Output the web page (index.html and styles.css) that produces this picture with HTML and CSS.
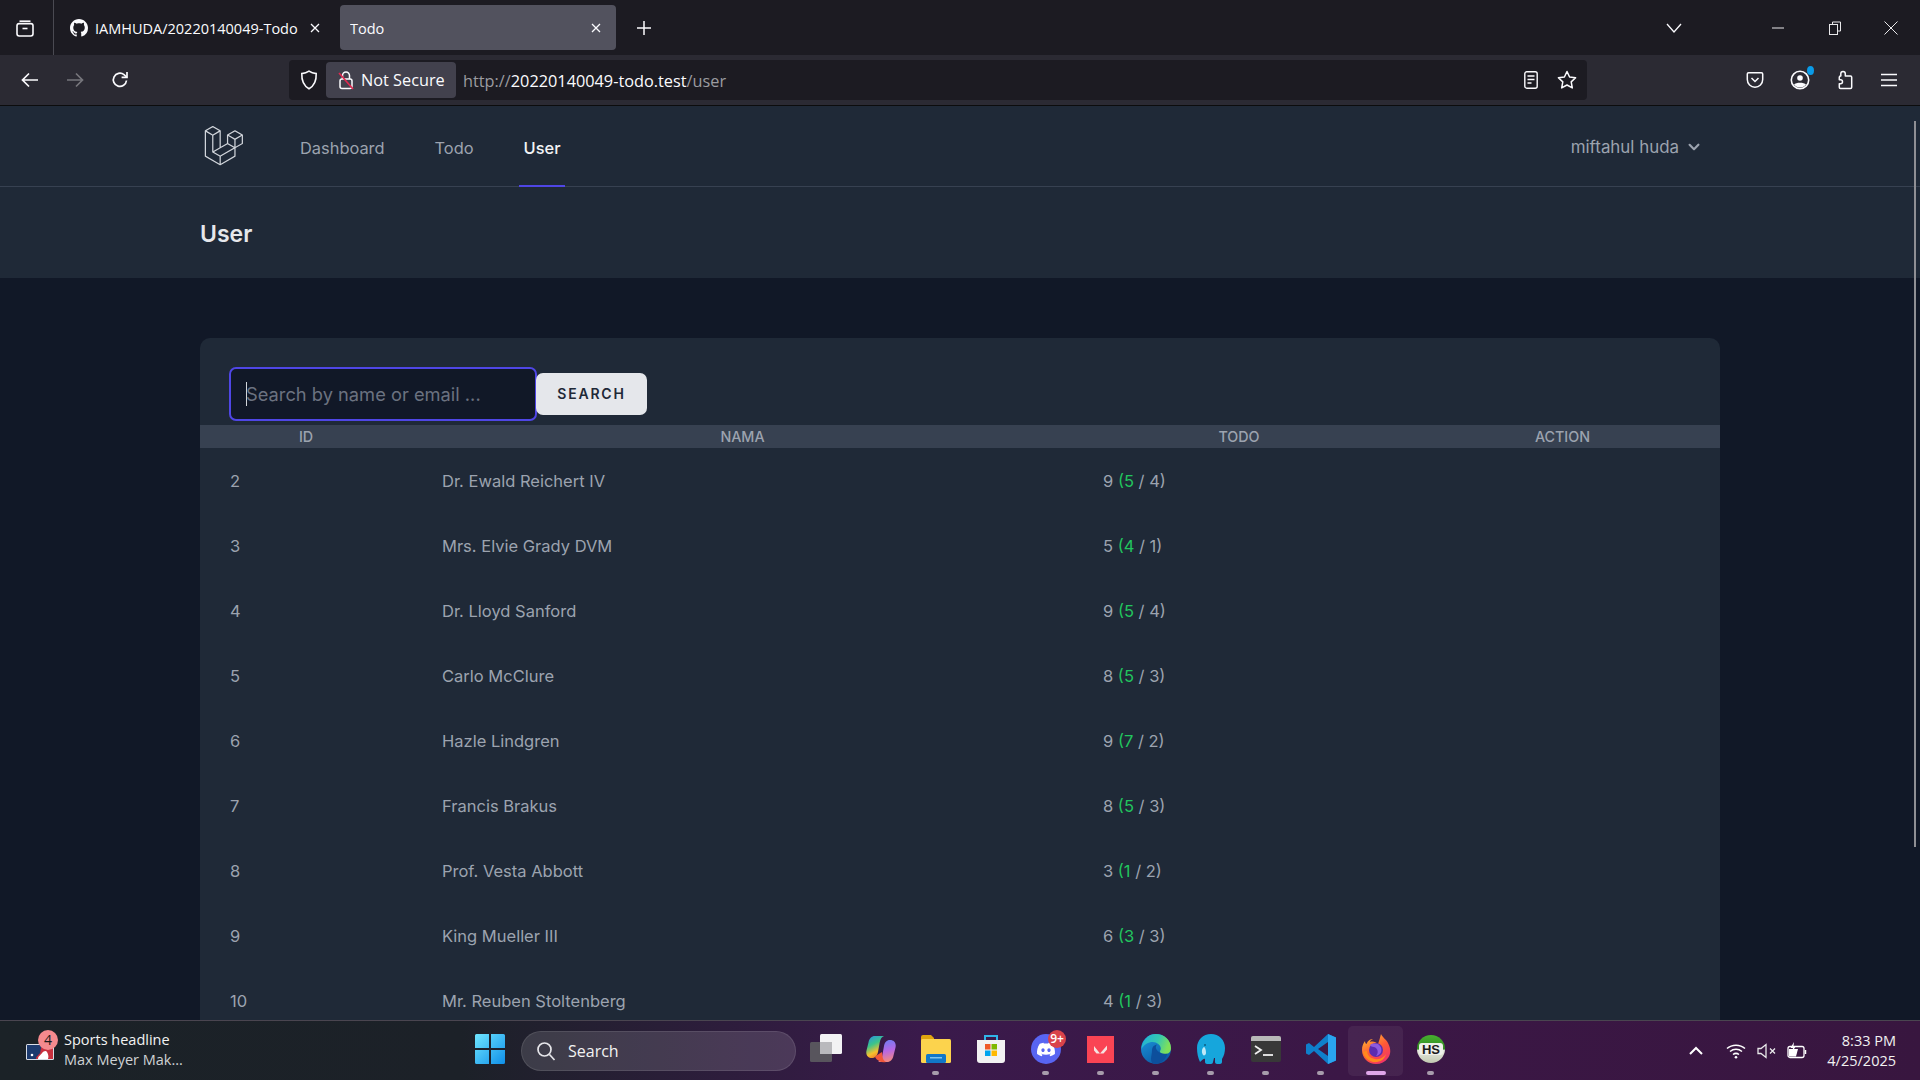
FILE: index.html
```html
<!DOCTYPE html>
<html lang="en">
<head>
    <meta charset="UTF-8">
    <title>Todo</title>
    <link rel="stylesheet" href="styles.css">
</head>
<body>
<div class="screen">
    <div class="tabbar">
        <div class="tab-list-btn">
            <svg width="20" height="20" viewBox="0 0 20 20" fill="none" stroke="#fbfbfe" stroke-width="1.6"><path d="M4.5 3.2h11"/><rect x="2" y="5.6" width="16" height="12.4" rx="2.2"/><path d="M7.5 10.5h5"/></svg>
        </div>
        <div class="tab tab-first">
            <svg class="favicon" width="18" height="18" viewBox="0 0 16 16" fill="#fbfbfe"><path d="M8 0C3.58 0 0 3.58 0 8c0 3.54 2.29 6.53 5.47 7.59.4.07.55-.17.55-.38 0-.19-.01-.82-.01-1.49-2.01.37-2.53-.49-2.69-.94-.09-.23-.48-.94-.82-1.13-.28-.15-.68-.52-.01-.53.63-.01 1.08.58 1.23.82.72 1.21 1.87.87 2.33.66.07-.52.28-.87.51-1.07-1.78-.2-3.64-.89-3.64-3.95 0-.87.31-1.59.82-2.15-.08-.2-.36-1.02.08-2.12 0 0 .67-.21 2.2.82.64-.18 1.32-.27 2-.27.68 0 1.36.09 2 .27 1.53-1.04 2.2-.82 2.2-.82.44 1.1.16 1.92.08 2.12.51.56.82 1.27.82 2.15 0 3.07-1.87 3.75-3.65 3.95.29.25.54.73.54 1.48 0 1.07-.01 1.93-.01 2.2 0 .21.15.46.55.38A8.013 8.013 0 0016 8c0-4.42-3.58-8-8-8z"/></svg>
            <span class="tab-title">IAMHUDA/20220140049-Todo</span>
            <svg class="tab-close" width="10" height="10" viewBox="0 0 10 10" stroke="#fbfbfe" stroke-width="1.3"><path d="M1 1l8 8M9 1l-8 8"/></svg>
        </div>
        <div class="tab tab-active">
            <span class="tab-title">Todo</span>
            <svg class="tab-close" width="10" height="10" viewBox="0 0 10 10" stroke="#fbfbfe" stroke-width="1.3"><path d="M1 1l8 8M9 1l-8 8"/></svg>
        </div>
        <div class="new-tab">
            <svg width="16" height="16" viewBox="0 0 16 16" stroke="#fbfbfe" stroke-width="1.5"><path d="M8 1v14M1 8h14"/></svg>
        </div>
        <div class="window-controls">
            <svg class="list-all" width="16" height="10" viewBox="0 0 16 10" fill="none" stroke="#fbfbfe" stroke-width="1.3"><path d="M1 1l7 8 7-8"/></svg>
            <svg class="win-btn" width="12" height="12" viewBox="0 0 12 12" stroke="#e8e8ea" stroke-width="1"><path d="M0 6h12"/></svg>
            <svg class="win-btn win-restore" width="12" height="14" viewBox="0 0 12 14" fill="none" stroke="#e8e8ea" stroke-width="1"><path d="M3.5 3V1h8v9H9"/><rect x=".5" y="3.5" width="8" height="10"/></svg>
            <svg class="win-btn" width="14" height="14" viewBox="0 0 14 14" stroke="#e8e8ea" stroke-width="1"><path d="M.5.5l13 13M13.5.5l-13 13"/></svg>
        </div>
    </div>

    <div class="toolbar">
        <div class="nav-arrows">
            <svg width="18" height="16" viewBox="0 0 18 16" fill="none" stroke="#fbfbfe" stroke-width="1.7"><path d="M17 8H2M8 1.5L1.5 8 8 14.5"/></svg>
            <svg width="18" height="16" viewBox="0 0 18 16" fill="none" stroke="#76767c" stroke-width="1.7"><path d="M1 8h15M10 1.5L16.5 8 10 14.5"/></svg>
            <svg width="18" height="18" viewBox="0 0 18 18" fill="none" stroke="#fbfbfe" stroke-width="1.7"><path d="M15.5 9.5A6.6 6.6 0 1 1 13 3.6L15.6 6"/><path d="M16 1v5.4h-5.4"/></svg>
        </div>
        <div class="urlbar">
            <svg class="shield" width="18" height="20" viewBox="0 0 18 20" fill="none" stroke="#fbfbfe" stroke-width="1.6"><path d="M9 1.2c2 1.4 4.6 2.2 7.2 2.4.3 6.6-1.8 12-7.2 15.2C3.600 15.600 1.500 10.200 1.800 3.600 4.400 3.400 7 2.600 9 1.200z"/></svg>
            <div class="not-secure">
                <svg width="18" height="20" viewBox="0 0 18 20" fill="none"><path d="M5.500 9V5.500a3.500 3.500 0 0 1 7 0V9" stroke="#fbfbfe" stroke-width="1.500"/><rect x="3" y="9" width="12" height="9.500" rx="2" stroke="#fbfbfe" stroke-width="1.500"/><path d="M2 3l14 16" stroke="#e22850" stroke-width="1.600"/></svg>
                <span>Not Secure</span>
            </div>
            <div class="url"><span class="url-dim">http://</span>20220140049-todo.test<span class="url-dim">/user</span></div>
            <svg class="reader" width="14" height="18" viewBox="0 0 14 18" fill="none" stroke="#fbfbfe" stroke-width="1.400"><rect x=".8" y=".8" width="12.400" height="16.400" rx="2"/><path d="M3.500 5h7M3.500 8.500h7M3.500 12h4"/></svg>
            <svg class="star" width="20" height="20" viewBox="0 0 20 20" fill="none" stroke="#fbfbfe" stroke-width="1.500" stroke-linejoin="round"><path d="M10 1.500l2.600 5.500 6 .8-4.400 4.100 1.100 6L10 15l-5.300 2.900 1.100-6L1.400 7.800l6-.8z"/></svg>
        </div>
        <div class="toolbar-right">
            <svg width="18" height="18" viewBox="0 0 18 18" fill="none" stroke="#fbfbfe" stroke-width="1.500"><path d="M2.500 1.800h13c.7 0 1.200.5 1.200 1.200v5.500a7.700 7.700 0 0 1-15.400 0V3c0-.7.500-1.200 1.200-1.200z"/><path d="M5.500 7L9 10.500 12.500 7"/></svg>
            <span class="account">
                <svg width="20" height="20" viewBox="0 0 20 20" fill="none"><circle cx="10" cy="10" r="8.700" stroke="#fbfbfe" stroke-width="1.600"/><circle cx="10" cy="8" r="2.800" fill="#fbfbfe"/><path d="M4 14.500c2-2.500 10-2.500 12 0-1.500 2-3.500 3-6 3s-4.500-1-6-3z" fill="#fbfbfe"/></svg>
                <i class="account-dot"></i>
            </span>
            <svg width="18" height="20" viewBox="0 0 18 20" fill="none" stroke="#fbfbfe" stroke-width="1.500" stroke-linejoin="round"><path d="M7 1.500c1.500 0 2.300 1 2.300 2.300V6h5.200c.7 0 1.200.5 1.200 1.200v10.100c0 .7-.5 1.200-1.200 1.200H4.500c-.7 0-1.200-.5-1.200-1.200v-3.600h1.200c1.400 0 2-1 2-2s-.6-2-2-2H3.300V7.200C3.300 6.500 3.800 6 4.500 6h.3V3.800C4.800 2.500 5.500 1.500 7 1.500z"/></svg>
            <svg class="menu-icon" width="16" height="14" viewBox="0 0 16 14" stroke="#fbfbfe" stroke-width="1.600"><path d="M0 1.500h16M0 7h16M0 12.500h16"/></svg>
        </div>
    </div>

    <div class="page">
        <nav class="topnav">
            <div class="topnav-inner">
                <svg class="logo" width="40" height="40" viewBox="0 0 50 52" fill="#d1d5db"><path d="M49.626 11.564a.809.809 0 0 1 .028.209v10.972a.8.8 0 0 1-.402.694l-9.209 5.302V39.25c0 .286-.152.55-.4.694L20.42 51.01c-.044.025-.092.041-.14.058-.018.006-.035.017-.054.022a.805.805 0 0 1-.41 0c-.022-.006-.042-.018-.063-.026-.044-.016-.09-.03-.132-.054L.402 39.944A.801.801 0 0 1 0 39.25V6.334c0-.072.01-.142.028-.21.006-.023.02-.044.028-.067.015-.042.029-.085.051-.124.015-.026.037-.047.055-.071.023-.032.044-.065.071-.093.023-.023.053-.04.079-.06.029-.024.055-.05.088-.069h.001l9.61-5.533a.802.802 0 0 1 .8 0l9.61 5.533h.002c.032.02.059.045.088.068.026.02.055.038.078.06.028.029.048.062.072.094.017.024.04.045.054.071.023.04.036.082.052.124.008.023.022.044.028.068a.809.809 0 0 1 .028.209v20.559l8.008-4.611v-10.51c0-.07.01-.141.028-.208.007-.024.02-.045.028-.068.016-.042.03-.085.052-.124.015-.026.037-.047.054-.071.024-.032.044-.065.072-.093.023-.023.052-.04.078-.06.03-.024.056-.05.088-.069h.001l9.611-5.533a.801.801 0 0 1 .8 0l9.61 5.533c.034.02.06.045.09.068.025.02.054.038.077.06.028.029.048.062.072.094.018.024.04.045.054.071.023.039.036.082.052.124.009.023.022.044.028.068zm-1.574 10.718v-9.124l-3.363 1.936-4.646 2.675v9.124l8.01-4.611zm-9.61 16.505v-9.13l-4.57 2.61-13.05 7.448v9.216l17.62-10.144zM1.602 7.719v31.068L19.22 48.93v-9.214l-9.204-5.209-.003-.002-.004-.002c-.031-.018-.057-.044-.086-.066-.025-.02-.054-.036-.076-.058l-.002-.003c-.026-.025-.044-.056-.066-.084-.02-.027-.044-.05-.06-.078l-.001-.003c-.018-.03-.029-.066-.042-.1-.013-.03-.03-.058-.038-.09v-.001c-.01-.038-.012-.078-.016-.117-.004-.03-.012-.06-.012-.09v-.002-21.481L4.965 9.654 1.602 7.72zm8.81-5.994L2.405 6.334l8.005 4.609 8.006-4.61-8.006-4.608zm4.164 28.764l4.645-2.674V7.719l-3.363 1.936-4.646 2.675v20.096l3.364-1.937zM39.243 7.164l-8.006 4.609 8.006 4.609 8.005-4.61-8.005-4.608zm-.801 10.605l-4.646-2.675-3.363-1.936v9.124l4.645 2.674 3.364 1.937v-9.124zM20.02 38.33l11.743-6.704 5.87-3.35-8-4.606-9.211 5.303-8.395 4.833 7.993 4.524z"/></svg>
                <a class="nav-link">Dashboard</a>
                <a class="nav-link">Todo</a>
                <a class="nav-link active">User</a>
                <div class="user-menu">
                    <span>miftahul huda</span>
                    <svg width="22" height="22" viewBox="0 0 20 20" fill="#9ca3af"><path d="M5.293 7.293a1 1 0 0 1 1.414 0L10 10.586l3.293-3.293a1 1 0 1 1 1.414 1.414l-4 4a1 1 0 0 1-1.414 0l-4-4a1 1 0 0 1 0-1.414z"/></svg>
                </div>
            </div>
        </nav>
        <header class="page-header">
            <h2>User</h2>
        </header>
        <main class="content">
            <div class="card">
                <form class="search-form">
                    <div class="search-input"><i class="caret"></i><span>Search by name or email ...</span></div>
                    <button type="button" class="search-btn">Search</button>
                </form>
                <table class="user-table">
                    <colgroup>
                        <col class="col-id"><col class="col-name"><col class="col-todo"><col class="col-action">
                    </colgroup>
                    <thead>
                        <tr><th>ID</th><th>Nama</th><th>Todo</th><th>Action</th></tr>
                    </thead>
                    <tbody>
                        <tr><td>2</td><td>Dr. Ewald Reichert IV</td><td>9 <span class="done">(5</span> / 4)</td><td></td></tr>
                        <tr><td>3</td><td>Mrs. Elvie Grady DVM</td><td>5 <span class="done">(4</span> / 1)</td><td></td></tr>
                        <tr><td>4</td><td>Dr. Lloyd Sanford</td><td>9 <span class="done">(5</span> / 4)</td><td></td></tr>
                        <tr><td>5</td><td>Carlo McClure</td><td>8 <span class="done">(5</span> / 3)</td><td></td></tr>
                        <tr><td>6</td><td>Hazle Lindgren</td><td>9 <span class="done">(7</span> / 2)</td><td></td></tr>
                        <tr><td>7</td><td>Francis Brakus</td><td>8 <span class="done">(5</span> / 3)</td><td></td></tr>
                        <tr><td>8</td><td>Prof. Vesta Abbott</td><td>3 <span class="done">(1</span> / 2)</td><td></td></tr>
                        <tr><td>9</td><td>King Mueller III</td><td>6 <span class="done">(3</span> / 3)</td><td></td></tr>
                        <tr><td>10</td><td>Mr. Reuben Stoltenberg</td><td>4 <span class="done">(1</span> / 3)</td><td></td></tr>
                    </tbody>
                </table>
            </div>
        </main>
        <div class="scrollbar"></div>
    </div>

    <div class="taskbar">
        <div class="widget">
            <span class="widget-icon">
                <svg width="28" height="16" viewBox="0 0 28 16"><rect width="28" height="16" rx="1.500" fill="#d8dde6"/><rect x="1" y="1" width="26" height="14" fill="#1c3a6e"/><path d="M17 1h10v14H10c0-3 3-4 4-6s0-5 3-8z" fill="#c8303e"/><path d="M12 15c0-3 3-4 4-6 1.500-2 4-3 5-1s2 4 1 7z" fill="#fff"/><circle cx="6" cy="11" r="1.300" fill="#fff"/></svg>
                <i class="widget-badge">4</i>
            </span>
            <div class="widget-text">
                <div>Sports headline</div>
                <div class="widget-sub">Max Meyer Mak...</div>
            </div>
        </div>

        <div class="tb-item tb-start">
            <svg width="30" height="30" viewBox="0 0 30 30"><defs><linearGradient id="win" x1="0" y1="0" x2="1" y2="1"><stop offset="0" stop-color="#6fe6ff"/><stop offset="1" stop-color="#0f8fe8"/></linearGradient></defs><path d="M0 1.500A1.500 1.500 0 0 1 1.500 0H14v14H0zM16 0h12.500A1.500 1.500 0 0 1 30 1.500V14H16zM0 16h14v14H1.500A1.500 1.500 0 0 1 0 28.500zM16 16h14v12.500a1.500 1.500 0 0 1-1.500 1.500H16z" fill="url(#win)"/></svg>
        </div>
        <div class="tb-search">
            <svg width="20" height="20" viewBox="0 0 20 20" fill="none" stroke="#e6e6ea" stroke-width="1.700"><circle cx="8.500" cy="8.500" r="6.500"/><path d="M13.500 13.500l5 5.500"/></svg>
            <span>Search</span>
        </div>

        <div class="tb-item">
            <svg width="32" height="30" viewBox="0 0 32 30"><rect x="10" y="0" width="22" height="20" rx="1.500" fill="#f2f2f4"/><rect x="0" y="8" width="22" height="20" rx="1.500" fill="#5c5c60" fill-opacity=".9"/><rect x="10" y="8" width="12" height="12" fill="#b9b9bd"/></svg>
        </div>
        <div class="tb-item">
            <svg width="30" height="28" viewBox="0 0 30 28"><defs><linearGradient id="cp1" x1="0" y1="0" x2=".4" y2="1"><stop offset="0" stop-color="#2a8fe8"/><stop offset=".45" stop-color="#3cc48a"/><stop offset=".8" stop-color="#f6c12e"/><stop offset="1" stop-color="#f08a2a"/></linearGradient><linearGradient id="cp2" x1=".4" y1="0" x2=".6" y2="1"><stop offset="0" stop-color="#6f7cf2"/><stop offset=".5" stop-color="#b768e4"/><stop offset="1" stop-color="#f58a7a"/></linearGradient></defs><path d="M9 1h9c-2.500 1-3.500 3-4.200 6L12 17c-.7 3.500-2.500 6-6 6-4 0-6.500-3-5.500-7.500l2-8C3.300 3.500 5.500 1 9 1z" fill="url(#cp1)"/><path d="M21 27h-9c2.500-1 3.500-3 4.200-6L18 11c.7-3.500 2.500-6 6-6 4 0 6.500 3 5.500 7.500l-2 8c-.8 4-3 6.500-6.500 6.500z" fill="url(#cp2)"/><path d="M9 22c2 4 7 6 11 5-2-1-3.500-3-3.500-6l-.5-4c-2 1-5 3-7 5z" fill="#f0583a"/></svg>
        </div>
        <div class="tb-item has-dot">
            <svg width="30" height="28" viewBox="0 0 30 28"><path d="M0 2a2 2 0 0 1 2-2h8l3 3h0v4H0z" fill="#e0a50f"/><rect y="4" width="30" height="24" rx="1.500" fill="#fcd34d"/><rect x="5" y="19" width="20" height="9" rx="1.500" fill="#1177c8"/><rect x="9" y="22" width="12" height="1.500" fill="#7cc4f0"/></svg>
        </div>
        <div class="tb-item">
            <svg width="30" height="30" viewBox="0 0 30 30"><path d="M9 6V2h12v4" fill="none" stroke="#30b4e8" stroke-width="2"/><path d="M1 6h28v20a3 3 0 0 1-3 3H4a3 3 0 0 1-3-3z" fill="#f2f2f2"/><rect x="9" y="10" width="5.500" height="5.500" fill="#ef5a28"/><rect x="15.500" y="10" width="5.500" height="5.500" fill="#7eb900"/><rect x="9" y="16.500" width="5.500" height="5.500" fill="#00a4ef"/><rect x="15.500" y="16.500" width="5.500" height="5.500" fill="#ffb900"/></svg>
        </div>
        <div class="tb-item has-dot">
            <svg width="30" height="30" viewBox="0 0 30 30"><ellipse cx="15" cy="15" rx="15" ry="15" fill="#5865f2"/><g transform="translate(6 6.500) scale(.75)"><path fill="#fff" d="M20.317 4.37a19.791 19.791 0 0 0-4.885-1.515.074.074 0 0 0-.079.037c-.21.375-.444.864-.608 1.25a18.27 18.27 0 0 0-5.487 0 12.64 12.64 0 0 0-.617-1.25.077.077 0 0 0-.079-.037A19.736 19.736 0 0 0 3.677 4.37a.07.07 0 0 0-.032.027C.533 9.046-.32 13.58.099 18.057a.082.082 0 0 0 .031.057 19.9 19.9 0 0 0 5.993 3.03.078.078 0 0 0 .084-.028c.462-.63.874-1.295 1.226-1.994a.076.076 0 0 0-.041-.106 13.107 13.107 0 0 1-1.872-.892.077.077 0 0 1-.008-.128 10.2 10.2 0 0 0 .372-.292.074.074 0 0 1 .077-.01c3.928 1.793 8.18 1.793 12.062 0a.074.074 0 0 1 .078.01c.12.098.246.198.373.292a.077.077 0 0 1-.006.127 12.299 12.299 0 0 1-1.873.892.077.077 0 0 0-.041.107c.36.698.772 1.362 1.225 1.993a.076.076 0 0 0 .084.028 19.839 19.839 0 0 0 6.002-3.03.077.077 0 0 0 .032-.054c.5-5.177-.838-9.674-3.549-13.66a.061.061 0 0 0-.031-.03zM8.020 15.330c-1.183 0-2.157-1.085-2.157-2.419 0-1.333.956-2.419 2.157-2.419 1.210 0 2.176 1.096 2.157 2.420 0 1.333-.956 2.418-2.157 2.418zm7.975 0c-1.183 0-2.157-1.085-2.157-2.419 0-1.333.955-2.419 2.157-2.419 1.210 0 2.176 1.096 2.157 2.420 0 1.333-.946 2.418-2.157 2.418z"/></g></svg>
            <i class="tb-badge">9+</i>
        </div>
        <div class="tb-item has-dot">
            <svg width="27" height="27" viewBox="0 0 27 27"><rect width="27" height="27" fill="#fa4454"/><path d="M7 10l6 7.500h-3.500L7 14.500zM20 9.500v4l-3.500 4H13z" fill="#f5e3e0"/></svg>
        </div>
        <div class="tb-item has-dot">
            <svg width="30" height="30" viewBox="0 0 30 30"><defs><linearGradient id="edge1" x1="0" y1="0" x2=".6" y2="1"><stop offset="0" stop-color="#1c9be0"/><stop offset="1" stop-color="#0c59a4"/></linearGradient><linearGradient id="edge2" x1="0" y1="0" x2="1" y2=".3"><stop offset="0" stop-color="#1faedd"/><stop offset=".6" stop-color="#35c8b0"/><stop offset="1" stop-color="#7ee05a"/></linearGradient></defs><circle cx="15" cy="15" r="15" fill="url(#edge1)"/><path d="M15 0c8 0 15 6 15 14 0 4-2.500 6-6 6-2 0-5-.5-5-2.500 0-1 .8-1.500.8-3 0-3.500-4-6.500-8-6.500-4.500 0-8.500 2.500-11.500 7C1.500 6 7 0 15 0z" fill="url(#edge2)"/><path d="M11 16c0-3 2-5 5-5.500-1.500 1.500-1.500 3.500-.5 5 1.800 3 6 5 11 4-2 6-7 10.500-12 10.500-3 0-4.500-2-4.500-5 0-2 1-6 1-9z" fill="#0d4f9c"/></svg>
        </div>
        <div class="tb-item has-dot">
            <svg width="28" height="30" viewBox="0 0 28 30"><path d="M14 0c8 0 14 6 14 14 0 4-1 8-3 11v3c0 1-1 2-2 2h-3c-1 0-2-1-2-2v-4h-1l-1 4c0 1-1 2-2 2H10c-1 0-2-1-2-2v-3C6 24 5 27 3 28 1 24 0 19 0 14 0 6 6 0 14 0z" fill="#16a6dc"/><path d="M7 13c-2 1-3 5-1 8 1 1 3 0 3-2 0-3-1-6-2-6z" fill="#bfe9f7"/><circle cx="8" cy="11" r="1" fill="#0b5f85"/></svg>
        </div>
        <div class="tb-item has-dot">
            <svg width="30" height="26" viewBox="0 0 30 26"><rect width="30" height="26" rx="2" fill="#383838"/><path d="M0 2a2 2 0 0 1 2-2h26a2 2 0 0 1 2 2v3H0z" fill="#b8b8b8"/><path d="M4 10l6 4-6 4" fill="none" stroke="#f0f0f0" stroke-width="1.800"/><path d="M12 19h10" stroke="#f0f0f0" stroke-width="1.800"/></svg>
        </div>
        <div class="tb-item has-dot">
            <svg width="30" height="30" viewBox="0 0 30 30"><path d="M22 0l8 3.500v23L22 30 8 17l-5 4-3-1.500V10.500L3 9l5 4z" fill="#0f7fcb"/><path d="M22 0l8 3.500v23L22 30z" fill="#2aa4ef"/><path d="M22 8L12 15l10 7z" fill="#3b1846"/></svg>
        </div>
        <div class="tb-item tb-current">
            <svg width="30" height="30" viewBox="0 0 30 30"><defs><linearGradient id="ff" x1=".2" y1="0" x2=".8" y2="1"><stop offset="0" stop-color="#ffbd2e"/><stop offset=".5" stop-color="#ff5a36"/><stop offset="1" stop-color="#ef2f6e"/></linearGradient></defs><path d="M20 0c1 3 5 5 7 9 3 6 3 11 0 15-3 4-7 6-12 6C7 30 1 24 1 16c0-4 1-6 3-9 0 2 1 3 1.500 3C7 6 10 5 12 5c-2 1-3 2-3 3 3-1 6 0 8 2 1-3 2-6 3-10z" fill="url(#ff)"/><circle cx="15" cy="16" r="7" fill="#5b2cb0"/><path d="M9 11c3-2 8-2 10 1 3 4 1 9-4 10 3-3 2-8-2-9-2-.5-3 0-4-2z" fill="#8d5be0"/><path d="M2 18c1 6 7 11 14 10 5-.7 8-4 9-8-2 3-6 6-11 5-5-.7-8-4-8-8-1 0-3 0-4 1z" fill="#ff8a1e"/></svg>
        </div>
        <div class="tb-item has-dot">
            <svg width="30" height="30" viewBox="0 0 30 30"><defs><linearGradient id="hs" x1="0" y1="0" x2="0" y2="1"><stop offset="0" stop-color="#48b030"/><stop offset=".5" stop-color="#2f8a20"/><stop offset=".55" stop-color="#e8eae0"/><stop offset="1" stop-color="#c0c8b0"/></linearGradient></defs><circle cx="15" cy="15" r="14" fill="url(#hs)"/><rect x="3" y="9" width="24" height="12" rx="3" fill="#eef0ea"/><text x="15" y="19.500" class="hs-text">HS</text></svg>
        </div>

        <div class="tray">
            <svg class="tray-caret" width="14" height="9" viewBox="0 0 14 9" fill="none" stroke="#fff" stroke-width="2"><path d="M1 8l6-6 6 6"/></svg>
            <svg class="tray-wifi" width="20" height="16" viewBox="0 0 20 16" fill="none" stroke="#fff" stroke-width="1.500"><path d="M1 5.500c5-4.500 13-4.500 18 0M4 8.500c3.500-3 8.500-3 12 0M7 11.500c2-1.500 4-1.500 6 0"/><circle cx="10" cy="14.300" r="1.300" fill="#fff" stroke="none"/></svg>
            <svg class="tray-vol" width="20" height="16" viewBox="0 0 20 16" fill="none" stroke="#e8e8ea" stroke-width="1.300"><path d="M1 5.500h3L9 1.500v13l-5-4H1z"/><path d="M13 5.500l5 5M18 5.500l-5 5"/></svg>
            <svg class="tray-bat" width="20" height="18" viewBox="0 0 20 18" fill="none"><rect x="1" y="4.500" width="16" height="11" rx="2" stroke="#fff" stroke-width="1.300"/><path d="M18.500 8v4" stroke="#fff" stroke-width="1.500"/><path d="M2 7h9l-2 7.500H2z" fill="#fff"/><path d="M7 0L3.500 6H6L5 10l4-6H6.500z" fill="#fff"/></svg>
            <div class="clock">
                <div>8:33 PM</div>
                <div>4/25/2025</div>
            </div>
        </div>
    </div>
</div>
</body>
</html>
```
FILE: styles.css
```css
* {
    box-sizing: border-box;
}
body {
    margin: 0;
    background-color: #111827;
    font-family: Inter, "Noto Sans", sans-serif;
    overflow: hidden;
}
svg {
    display: block;
    flex: none;
}
.screen {
    display: flex;
    flex-direction: column;
    height: 100vh;
}

/* browser tabs */
.tabbar {
    display: flex;
    align-items: center;
    height: 55px;
    background: #1c1b22;
    color: #fbfbfe;
    font-family: "Open Sans", "Noto Sans", sans-serif;
    font-size: 14.5px;
}
.tab-list-btn {
    display: flex;
    align-items: center;
    justify-content: center;
    width: 54px;
    height: 55px;
    padding-right: 4px;
    border-right: 1px solid #4a4a52;
}
.tab {
    display: flex;
    align-items: center;
    height: 45px;
    border-radius: 4px;
}
.tab-first {
    width: 286px;
    padding: 0 20px 0 16px;
}
.tab-active {
    width: 276px;
    padding: 0 15px 0 10px;
    background: #52525e;
}
.favicon {
    margin-right: 7px;
}
.tab-title {
    flex: 1;
    padding-top: 1px;
    white-space: nowrap;
    overflow: hidden;
}
.new-tab {
    margin-left: 20px;
}
.window-controls {
    display: flex;
    align-items: center;
    margin-left: auto;
}
.list-all {
    margin-right: 90px;
}
.win-btn {
    margin-right: 44px;
}
.win-btn:last-child {
    margin-right: 22px;
}
.win-restore {
    margin-left: 1px;
    margin-right: 43px;
}

/* browser toolbar */
.toolbar {
    display: flex;
    align-items: center;
    height: 51px;
    background: #2b2a33;
    border-bottom: 1px solid #0c0c0d;
}
.nav-arrows {
    display: flex;
    align-items: center;
    gap: 27px;
    width: 289px;
    padding-left: 21px;
}
.urlbar {
    display: flex;
    align-items: center;
    width: 1298px;
    height: 40px;
    padding: 0 10px 0 11px;
    background: #1c1b22;
    border-radius: 4px;
    color: #fbfbfe;
    font-family: "Open Sans", "Noto Sans", sans-serif;
    font-size: 16.3px;
}
.not-secure {
    display: flex;
    align-items: center;
    gap: 6px;
    height: 36px;
    width: 130px;
    margin-left: 8px;
    padding-left: 11px;
    background: #42414d;
    border-radius: 4px;
    white-space: nowrap;
}
.url {
    flex: 1;
    margin-left: 7px;
    padding-top: 1px;
}
.url-dim {
    color: #9b9ba0;
}
.reader {
    margin-right: 19px;
}
.toolbar-right {
    display: flex;
    align-items: center;
    gap: 26px;
    margin-left: 159px;
}
.menu-icon {
    margin-left: 1px;
}
.account {
    position: relative;
    display: block;
}
.account-dot {
    position: absolute;
    top: -4px;
    right: -4px;
    width: 7px;
    height: 9px;
    border-radius: 50%;
    background: #0a9be8;
}

/* app navigation */
.page {
    position: relative;
    flex: 1;
    min-height: 0;
    overflow: hidden;
    background: #111827;
}
.topnav {
    height: 81px;
    background: #1f2937;
    border-bottom: 1px solid #374151;
}
.topnav-inner {
    display: flex;
    align-items: stretch;
    height: 80px;
    padding-left: 204px;
    font-size: 16.4px;
}
.logo {
    align-self: center;
    margin-right: 56px;
}
.nav-link {
    display: flex;
    align-items: center;
    margin-right: 50px;
    padding-top: 3px;
    color: #9ca3af;
    font-weight: 400;
}
.nav-link.active {
    position: relative;
    color: #f3f4f6;
    font-weight: 500;
    margin-right: 0;
}
.nav-link.active::after {
    content: "";
    position: absolute;
    left: -5px;
    right: -5px;
    bottom: -1px;
    height: 2px;
    background: #4f46e5;
}
.user-menu {
    display: flex;
    align-items: center;
    gap: 4px;
    margin-left: auto;
    margin-right: 215px;
    padding-top: 2px;
    color: #9ca3af;
    font-size: 16.9px;
    font-weight: 400;
}
.page-header {
    display: flex;
    align-items: center;
    height: 91px;
    padding: 2px 200px 0;
    background: #1f2937;
}
.page-header h2 {
    margin: 0;
    color: #e5e7eb;
    font-size: 23px;
    font-weight: 600;
}

/* user card */
.content {
    padding: 60px 200px 0;
}
.card {
    background: #1f2937;
    border-radius: 10px 10px 0 0;
}
.search-form {
    display: flex;
    align-items: center;
    padding: 29px 0 4px 29px;
}
.search-input {
    display: flex;
    align-items: center;
    width: 308px;
    height: 54px;
    margin-right: -1px;
    padding-left: 15px;
    background: #111827;
    border: 2.5px solid #4f46e5;
    border-radius: 7px;
    color: #6b7280;
    font-size: 18.3px;
}
.caret {
    width: 1px;
    height: 24px;
    margin-right: -1px;
    background: #d1d5db;
}
.search-btn {
    width: 111px;
    height: 42px;
    padding-bottom: 2px;
    background: #e5e7eb;
    border: none;
    border-radius: 7px;
    color: #1f2937;
    font-family: inherit;
    font-size: 14px;
    font-weight: 600;
    letter-spacing: 1.8px;
    text-transform: uppercase;
}
.user-table {
    width: 100%;
    table-layout: fixed;
    border-collapse: collapse;
    font-size: 16.5px;
    color: #9ca3af;
}
.col-id {
    width: 212px;
}
.col-name {
    width: 661px;
}
.col-todo {
    width: 332px;
}
.user-table th {
    height: 23px;
    padding: 0;
    background: #374151;
    color: #9ca3af;
    font-size: 14.3px;
    font-weight: 500;
    text-align: center;
    text-transform: uppercase;
}
.user-table td {
    height: 65px;
    padding: 0 30px;
    white-space: nowrap;
}
.done {
    color: #22c55e;
}
.scrollbar {
    position: absolute;
    top: 15px;
    right: 4px;
    width: 2px;
    height: 726px;
    background: #8f8f94;
}

/* windows taskbar */
.taskbar {
    display: flex;
    align-items: center;
    flex: none;
    height: 60px;
    background: linear-gradient(90deg, #1b2227 0%, #1c2128 24%, #3a1a4b 48%, #3b1746 70%, #38163f 100%);
    border-top: 1px solid #4a4550;
    color: #f2f2f2;
    font-family: "Open Sans", "Noto Sans", sans-serif;
}
.widget {
    display: flex;
    align-items: center;
    gap: 10px;
    width: 462px;
    padding-left: 26px;
    font-size: 14.5px;
    line-height: 20px;
}
.widget-icon {
    position: relative;
    display: block;
    margin-top: 3px;
}
.widget-text {
    margin-top: -2px;
}
.widget-badge {
    position: absolute;
    top: -14px;
    right: -4px;
    width: 20px;
    height: 20px;
    border-radius: 50%;
    background: #f58a8e;
    color: #1b1b1b;
    font-size: 14px;
    font-style: normal;
    line-height: 20px;
    text-align: center;
}
.widget-sub {
    color: #cfd2d4;
}
.tb-item {
    position: relative;
    display: flex;
    align-items: center;
    justify-content: center;
    width: 55px;
    height: 50px;
    padding-bottom: 3px;
}
.tb-start {
    margin-right: 4px;
}
.tb-search {
    display: flex;
    align-items: center;
    gap: 12px;
    width: 275px;
    height: 40px;
    padding-left: 14px;
    margin-right: 2px;
    background: rgba(255, 255, 255, 0.13);
    border: 1px solid rgba(255, 255, 255, 0.1);
    border-radius: 20px;
    font-size: 16px;
}
.has-dot::after,
.tb-current::after {
    content: "";
    position: absolute;
    left: 50%;
    bottom: 1px;
    width: 7px;
    height: 4px;
    margin-left: -3.5px;
    border-radius: 2px;
    background: #a79cac;
}
.tb-current {
    background: rgba(255, 255, 255, 0.06);
    border-radius: 5px;
}
.tb-current::after {
    width: 20px;
    margin-left: -10px;
    background: #e0a6ea;
}
.tb-badge {
    position: absolute;
    top: 4px;
    right: 7px;
    width: 18px;
    height: 18px;
    border-radius: 50%;
    background: #d9434a;
    color: #fff;
    font-size: 12px;
    font-style: normal;
    font-weight: 600;
    line-height: 18px;
    text-align: center;
}
.hs-text {
    fill: #1c1c1c;
    font-family: "Liberation Sans", sans-serif;
    font-size: 13px;
    font-weight: 700;
    text-anchor: middle;
}
.tray {
    display: flex;
    align-items: center;
    flex: 1;
    padding-right: 24px;
    padding-left: 231px;
}
.tray-caret {
    margin-right: 23px;
}
.tray-wifi {
    margin-right: 11px;
}
.tray-vol {
    margin-right: 10px;
}
.clock {
    margin-left: auto;
    font-size: 14.5px;
    line-height: 20px;
    text-align: right;
}
```
